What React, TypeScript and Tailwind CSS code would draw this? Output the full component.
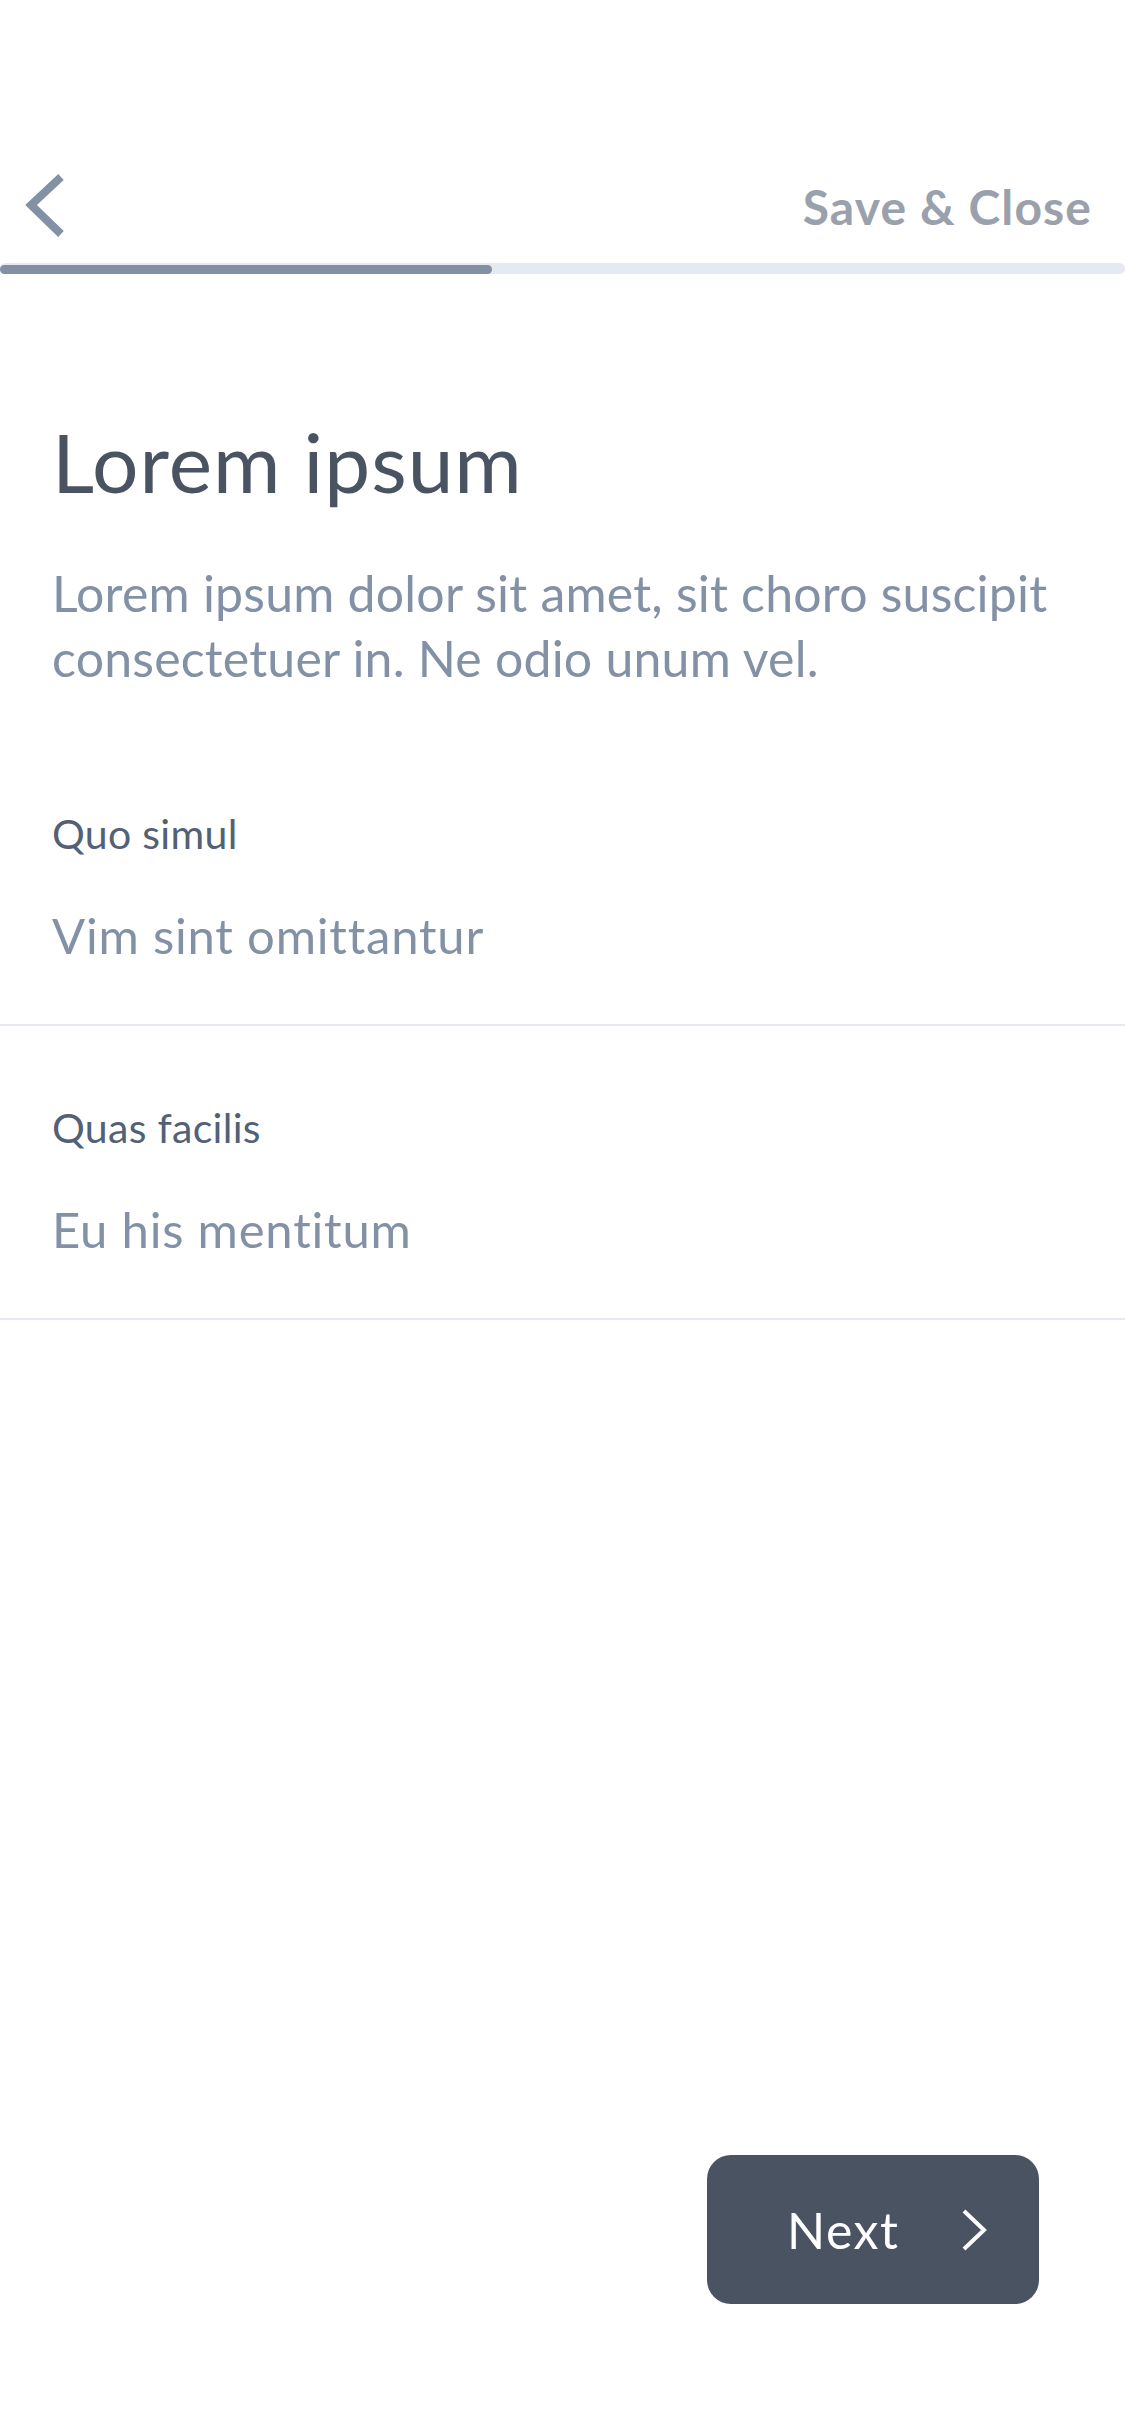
import React from "react";

function Field({ label, value }: { label: string; value: string }) {
  return (
    <div className="pt-[77px] pb-[60px] pl-[52px] pr-[52px] border-b-2 border-[#e5e9f0]">
      <div className="text-[41px] leading-[50px] tracking-[0.3px] text-[#536175]">{label}</div>
      <div className="mt-[47px] text-[49px] leading-[58px] tracking-[0.8px] text-[#8391a7]">{value}</div>
    </div>
  );
}

export default function App() {
  return (
    <div
      className="w-[1125px] min-h-[2436px] bg-white flex flex-col [font-variant-ligatures:none]"
      style={{ fontFamily: "Lato, 'Open Sans', sans-serif" }}
    >
      {/* Header */}
      <div className="h-[263px] flex justify-between items-start pt-[170px] pl-[22px] pr-[33px]">
        <button className="w-[48px] h-[72px]" aria-label="Back">
          <svg width="48" height="72" viewBox="0 0 48 72" fill="none">
            <path
              d="M39 7 L9 35 L39 64"
              stroke="#8391a7"
              strokeWidth="8"
              strokeLinecap="butt"
              strokeLinejoin="miter"
            />
          </svg>
        </button>
        <span className="mt-[9px] text-[48px] leading-[56px] tracking-[1.1px] font-bold text-[#9aa1ac]">
          Save &amp; Close
        </span>
      </div>

      {/* Progress */}
      <div className="h-[11px] bg-[#e4e9f2] rounded-full flex items-end">
        <div className="h-[9px] w-[492px] rounded-full bg-[#8290a6]" />
      </div>

      {/* Title & description */}
      <div className="pl-[52px] pr-[52px]">
        <h1 className="mt-[138px] text-[82px] leading-[98px] tracking-[1px] font-normal text-[#4a5361]">
          Lorem ipsum
        </h1>
        <p className="mt-[51px] text-[50px] leading-[65px] tracking-[0.2px] text-[#8391a7]">
          Lorem ipsum dolor sit amet, sit choro suscipit consectetuer in. Ne odio unum vel.
        </p>
      </div>

      <div className="mt-[41px]">
        <Field label="Quo simul" value="Vim sint omittantur" />
        <Field label="Quas facilis" value="Eu his mentitum" />
      </div>

      {/* Footer button */}
      <div className="mt-auto flex justify-end pr-[86px] pb-[132px]">
        <button className="w-[332px] h-[149px] rounded-[24px] bg-[#4a5361] flex items-center pl-[80px] text-white">
          <span className="text-[50px] leading-[60px] tracking-[1.5px]">Next</span>
          <svg className="ml-[62px]" width="26" height="44" viewBox="0 0 26 44" fill="none">
            <path d="M3 3 L23 22 L3 41" stroke="#ffffff" strokeWidth="4" strokeLinejoin="miter" />
          </svg>
        </button>
      </div>
    </div>
  );
}
